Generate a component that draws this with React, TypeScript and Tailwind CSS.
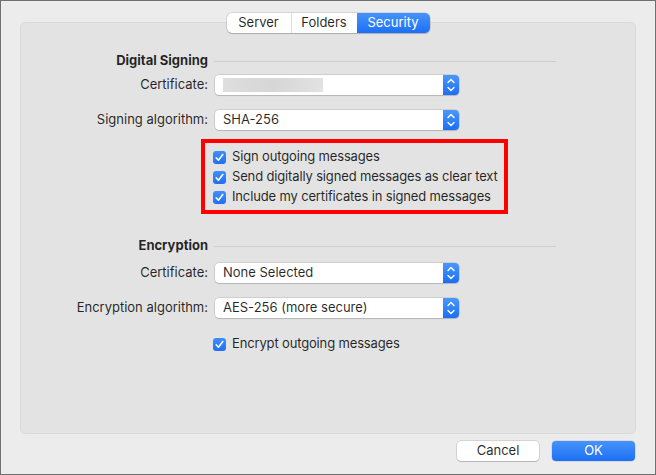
import React from 'react'

const font = { fontFamily: 'Inter, "Noto Sans", sans-serif' }

function Stepper() {
  return (
    <div className="h-full w-[16px] rounded-r-[4px] bg-gradient-to-b from-[#4a97fb] to-[#1a6ef4] flex items-center justify-center">
      <svg width="16" height="20" viewBox="0 0 16 20" fill="none">
        <path d="M5 7.5 L8 4.5 L11 7.5" stroke="white" strokeWidth="1.4" strokeLinecap="round" strokeLinejoin="round" />
        <path d="M5 12.5 L8 15.5 L11 12.5" stroke="white" strokeWidth="1.4" strokeLinecap="round" strokeLinejoin="round" />
      </svg>
    </div>
  )
}

function Popup({ value, blurred }: { value?: string; blurred?: boolean }) {
  return (
    <div className="h-[20px] w-[244px] flex rounded-[4px] bg-white shadow-[0_0_0_0.5px_rgba(0,0,0,0.18),0_1px_1px_rgba(0,0,0,0.12)]">
      <div className="flex-1 flex items-center pl-[8px] text-[13px] text-black/85 whitespace-nowrap">
        {blurred ? (
          <div className="h-[14px] w-[100px] bg-gradient-to-r from-[#dedede] via-[#d6d6d6] to-[#e2e2e2] blur-[0.5px]" />
        ) : (
          value
        )}
      </div>
      <Stepper />
    </div>
  )
}

function Row({ label, children }: { label: string; children: React.ReactNode }) {
  return (
    <div className="flex items-center h-[20px]">
      <div className="w-[187px] text-right text-[13px] text-black/85 whitespace-nowrap">{label}</div>
      <div className="ml-[7px]">{children}</div>
    </div>
  )
}

function Heading({ title }: { title: string }) {
  return (
    <div className="flex items-center h-[20px]">
      <div className="w-[187px] text-right text-[13px] font-bold text-black/85 whitespace-nowrap">{title}</div>
      <div className="ml-[6px] h-px w-[342px] bg-[#cfcfcf]" />
    </div>
  )
}

function Check({ label }: { label: string }) {
  return (
    <div className="flex items-center h-[20px] gap-[6px]">
      <div className="shrink-0 w-[13px] h-[13px] rounded-[3px] bg-gradient-to-b from-[#3f8ffb] to-[#1d70f4] flex items-center justify-center">
        <svg width="13" height="13" viewBox="0 0 13 13" fill="none">
          <path d="M3.2 6.8 L5.4 9.2 L9.8 3.6" stroke="white" strokeWidth="1.6" strokeLinecap="round" strokeLinejoin="round" />
        </svg>
      </div>
      <span className="text-[13px] tracking-[-0.15px] text-black/85 whitespace-nowrap">{label}</span>
    </div>
  )
}

function Tabs() {
  const tabs = ['Server', 'Folders', 'Security']
  const widths = ['w-[64px]', 'w-[66px]', 'w-[73px]']
  return (
    <div className="relative z-10 flex justify-center">
      <div className="flex h-[20px] rounded-[5px] bg-white shadow-[0_0_0_0.5px_rgba(0,0,0,0.2),0_1px_1px_rgba(0,0,0,0.15)] overflow-hidden">
        {tabs.map((t, i) => (
          <div
            key={t}
            className={`${widths[i]} flex items-center justify-center text-[13px] ${
              t === 'Security'
                ? 'bg-gradient-to-b from-[#4593fb] to-[#1c6ff4] text-white'
                : 'text-black/85'
            } ${i === 1 ? 'border-l border-[#dcdcdc]' : ''}`}
          >
            {t}
          </div>
        ))}
      </div>
    </div>
  )
}

export default function App() {
  return (
    <div style={font} className="w-[656px] h-[475px] border border-[#6f6f6f] bg-[#ececec] flex flex-col px-[19px] pt-[12px]">
      <Tabs />
      <div className="-mt-[11px] h-[412px] rounded-[5px] bg-[#e3e3e3] border border-[#dadada] flex flex-col pt-[28px]">
        <Heading title="Digital Signing" />
        <div className="mt-[4px]">
          <Row label="Certificate:">
            <Popup blurred />
          </Row>
        </div>
        <div className="mt-[15px]">
          <Row label="Signing algorithm:">
            <Popup value="SHA-256" />
          </Row>
        </div>
        <div className="mt-[9px] ml-[180px] w-[307px] border-[4px] border-[#ff0000] pt-[4px] pb-[3px] pl-[8px]">
          <Check label="Sign outgoing messages" />
          <Check label="Send digitally signed messages as clear text" />
          <Check label="Include my certificates in signed messages" />
        </div>
        <div className="mt-[22px]">
          <Heading title="Encryption" />
        </div>
        <div className="mt-[7px]">
          <Row label="Certificate:">
            <Popup value="None Selected" />
          </Row>
        </div>
        <div className="mt-[15px]">
          <Row label="Encryption algorithm:">
            <Popup value="AES-256 (more secure)" />
          </Row>
        </div>
        <div className="mt-[16px] ml-[192px]">
          <Check label="Encrypt outgoing messages" />
        </div>
      </div>
      <div className="mt-[7px] flex justify-end gap-[13px] pr-[1px]">
        <button className="w-[82px] h-[20px] rounded-[4px] bg-white text-[13px] text-black/85 shadow-[0_0_0_0.5px_rgba(0,0,0,0.2),0_1px_1px_rgba(0,0,0,0.15)]">
          Cancel
        </button>
        <button className="w-[83px] h-[20px] rounded-[4px] bg-gradient-to-b from-[#4593fb] to-[#1c6ff4] text-[13px] text-white shadow-[0_0_0_0.5px_rgba(0,0,0,0.15)]">
          OK
        </button>
      </div>
    </div>
  )
}
